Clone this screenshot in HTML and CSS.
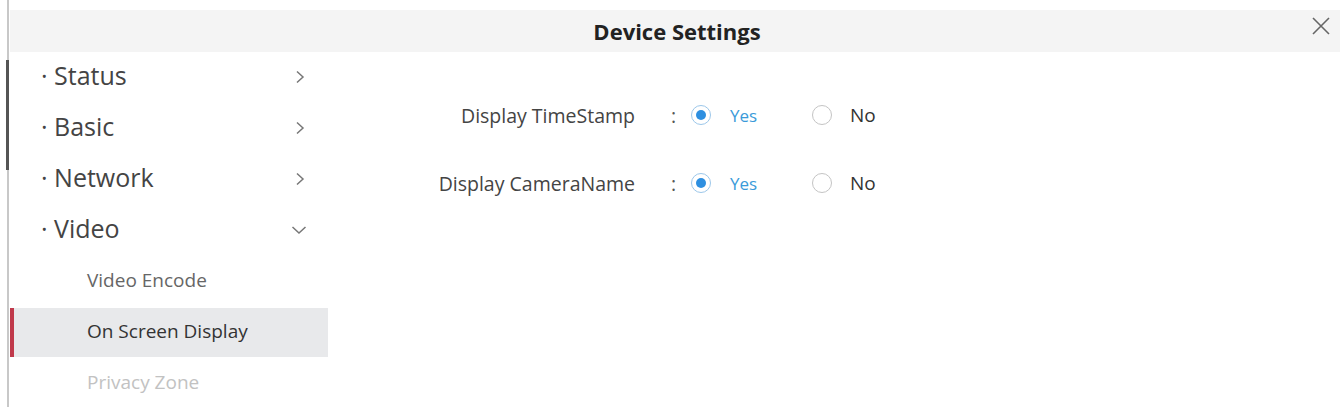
FILE: index.html
```html
<!DOCTYPE html>
<html lang="en">
<head>
    <meta charset="UTF-8">
    <title>Device Settings</title>
    <link rel="stylesheet" href="styles.css">
</head>
<body>
    <div class="scroll-track"><div class="scroll-thumb"></div></div>
    <div class="dialog">
        <div class="dialog-header">
            <span class="dialog-title">Device Settings</span>
            <span class="close-btn">
                <svg width="20" height="20" viewBox="0 0 20 20"><path d="M2 2 L18 18 M18 2 L2 18" stroke="#666" stroke-width="1.6" fill="none"/></svg>
            </span>
        </div>
        <div class="dialog-body">
            <ul class="side-menu">
                <li class="menu-item"><span>&middot; Status</span><svg class="arrow" width="10" height="14" viewBox="0 0 10 14"><path d="M2 1.5 L8 7 L2 12.5" stroke="#777" stroke-width="1.5" fill="none"/></svg></li>
                <li class="menu-item"><span>&middot; Basic</span><svg class="arrow" width="10" height="14" viewBox="0 0 10 14"><path d="M2 1.5 L8 7 L2 12.5" stroke="#777" stroke-width="1.5" fill="none"/></svg></li>
                <li class="menu-item"><span>&middot; Network</span><svg class="arrow" width="10" height="14" viewBox="0 0 10 14"><path d="M2 1.5 L8 7 L2 12.5" stroke="#777" stroke-width="1.5" fill="none"/></svg></li>
                <li class="menu-item"><span>&middot; Video</span><svg class="arrow down" width="16" height="10" viewBox="0 0 16 10"><path d="M1.5 2 L8 8 L14.5 2" stroke="#777" stroke-width="1.5" fill="none"/></svg></li>
                <li class="sub-item">Video Encode</li>
                <li class="sub-item active">On Screen Display</li>
                <li class="sub-item disabled">Privacy Zone</li>
            </ul>
            <div class="content">
                <div class="form-row">
                    <label class="field-label">Display TimeStamp</label>
                    <span class="colon">:</span>
                    <span class="radio checked"></span><span class="radio-text selected">Yes</span>
                    <span class="radio"></span><span class="radio-text">No</span>
                </div>
                <div class="form-row">
                    <label class="field-label">Display CameraName</label>
                    <span class="colon">:</span>
                    <span class="radio checked"></span><span class="radio-text selected">Yes</span>
                    <span class="radio"></span><span class="radio-text">No</span>
                </div>
            </div>
        </div>
    </div>
</body>
</html>
```

FILE: styles.css
```css
body {
    margin: 0;
    background: #fff;
    font-family: 'Open Sans', 'Noto Sans', sans-serif;
    color: #444;
    overflow: hidden;
}

.scroll-track {
    position: absolute;
    left: 7px;
    top: 0;
    width: 2px;
    height: 407px;
    background: #c8c8c8;
}

.scroll-thumb {
    position: absolute;
    left: -1px;
    top: 60px;
    width: 3px;
    height: 110px;
    background: #555;
}

.dialog {
    padding: 10px 0 0 10px;
}

.dialog-header {
    height: 42px;
    background: #f4f4f4;
    display: flex;
    align-items: center;
    justify-content: center;
    position: relative;
}

.dialog-title {
    font-size: 22px;
    font-weight: 700;
    color: #222;
    margin-left: 4px;
}

.close-btn {
    position: absolute;
    right: 9px;
    top: 6px;
}

.dialog-body {
    display: flex;
}

.side-menu {
    list-style: none;
    margin: 0;
    padding: 0;
    width: 318px;
}

.menu-item {
    height: 51px;
    box-sizing: border-box;
    display: flex;
    align-items: center;
    justify-content: space-between;
    padding: 0 23px 5px 31px;
    font-size: 25px;
    color: #444;
}

.menu-item .arrow {
    margin-top: 3px;
}

.menu-item .down {
    margin-right: -2px;
}

.sub-item {
    height: 51px;
    box-sizing: border-box;
    display: flex;
    align-items: center;
    padding: 0 0 3px 77px;
    font-size: 19px;
    color: #666;
}

.sub-item.active {
    background: #e8e9eb;
    color: #333;
    border-left: 4px solid #c0394b;
    padding-left: 73px;
    height: 49px;
    margin: 1px 0;
}

.sub-item.disabled {
    color: #c2c2c2;
}

.content {
    padding-top: 48px;
}

.form-row {
    display: flex;
    align-items: center;
    height: 30px;
    margin-bottom: 38px;
    font-size: 19.5px;
}

.field-label {
    width: 307px;
    text-align: right;
    color: #444;
}

.colon {
    margin-left: 36px;
    width: 20px;
    color: #555;
}

.radio {
    width: 20px;
    height: 20px;
    border: 1px solid #c4c4c4;
    border-radius: 50%;
    box-sizing: border-box;
    position: relative;
    flex-shrink: 0;
}

.radio.checked {
    border-color: #9cc7ea;
}

.radio.checked::after {
    content: '';
    position: absolute;
    left: 4px;
    top: 4px;
    width: 10px;
    height: 10px;
    border-radius: 50%;
    background: #2e8fe0;
}

.radio-text {
    margin-left: 18px;
    color: #333;
    font-size: 19px;
}

.radio-text.selected {
    width: 82px;
    margin-left: 19px;
    color: #3a9ad9;
    font-size: 17px;
}
```
